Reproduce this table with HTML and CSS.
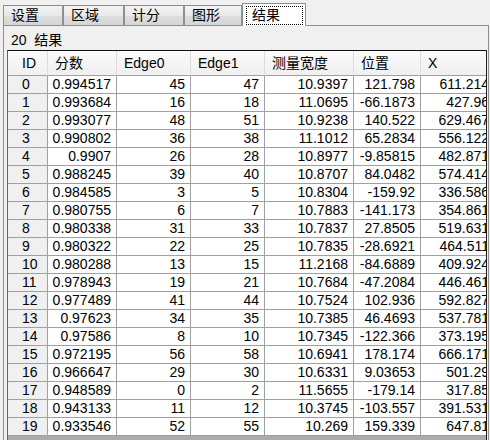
FILE: index.html
```html
<!DOCTYPE html>
<html>
<head>
<meta charset="utf-8">
<link rel="stylesheet" href="styles.css">
</head>
<body>
<div class="tabs">
  <div class="tab t1">设置</div>
  <div class="tab t2">区域</div>
  <div class="tab t3">计分</div>
  <div class="tab t4">图形</div>
  <div class="tab sel"><span class="focus">结果</span></div>
</div>
<div class="panel">
  <div class="label">20&nbsp;&nbsp;结果</div>
  <div class="grid">
    <table>
      <colgroup>
        <col class="c-id"><col class="c-score"><col class="c-e0"><col class="c-e1"><col class="c-w"><col class="c-pos"><col class="c-x">
      </colgroup>
      <thead>
        <tr><th class="rh">ID</th><th>分数</th><th>Edge0</th><th>Edge1</th><th>测量宽度</th><th>位置</th><th>X</th></tr>
      </thead>
      <tbody>
        <tr><td class="rh">0</td><td>0.994517</td><td>45</td><td>47</td><td>10.9397</td><td>121.798</td><td>611.214</td></tr>
        <tr><td class="rh">1</td><td>0.993684</td><td>16</td><td>18</td><td>11.0695</td><td>-66.1873</td><td>427.96</td></tr>
        <tr><td class="rh">2</td><td>0.993077</td><td>48</td><td>51</td><td>10.9238</td><td>140.522</td><td>629.467</td></tr>
        <tr><td class="rh">3</td><td>0.990802</td><td>36</td><td>38</td><td>11.1012</td><td>65.2834</td><td>556.122</td></tr>
        <tr><td class="rh">4</td><td>0.9907</td><td>26</td><td>28</td><td>10.8977</td><td>-9.85815</td><td>482.871</td></tr>
        <tr><td class="rh">5</td><td>0.988245</td><td>39</td><td>40</td><td>10.8707</td><td>84.0482</td><td>574.414</td></tr>
        <tr><td class="rh">6</td><td>0.984585</td><td>3</td><td>5</td><td>10.8304</td><td>-159.92</td><td>336.586</td></tr>
        <tr><td class="rh">7</td><td>0.980755</td><td>6</td><td>7</td><td>10.7883</td><td>-141.173</td><td>354.861</td></tr>
        <tr><td class="rh">8</td><td>0.980338</td><td>31</td><td>33</td><td>10.7837</td><td>27.8505</td><td>519.631</td></tr>
        <tr><td class="rh">9</td><td>0.980322</td><td>22</td><td>25</td><td>10.7835</td><td>-28.6921</td><td>464.511</td></tr>
        <tr><td class="rh">10</td><td>0.980288</td><td>13</td><td>15</td><td>11.2168</td><td>-84.6889</td><td>409.924</td></tr>
        <tr><td class="rh">11</td><td>0.978943</td><td>19</td><td>21</td><td>10.7684</td><td>-47.2084</td><td>446.461</td></tr>
        <tr><td class="rh">12</td><td>0.977489</td><td>41</td><td>44</td><td>10.7524</td><td>102.936</td><td>592.827</td></tr>
        <tr><td class="rh">13</td><td>0.97623</td><td>34</td><td>35</td><td>10.7385</td><td>46.4693</td><td>537.781</td></tr>
        <tr><td class="rh">14</td><td>0.97586</td><td>8</td><td>10</td><td>10.7345</td><td>-122.366</td><td>373.195</td></tr>
        <tr><td class="rh">15</td><td>0.972195</td><td>56</td><td>58</td><td>10.6941</td><td>178.174</td><td>666.171</td></tr>
        <tr><td class="rh">16</td><td>0.966647</td><td>29</td><td>30</td><td>10.6331</td><td>9.03653</td><td>501.29</td></tr>
        <tr><td class="rh">17</td><td>0.948589</td><td>0</td><td>2</td><td>11.5655</td><td>-179.14</td><td>317.85</td></tr>
        <tr><td class="rh">18</td><td>0.943133</td><td>11</td><td>12</td><td>10.3745</td><td>-103.557</td><td>391.531</td></tr>
        <tr><td class="rh">19</td><td>0.933546</td><td>52</td><td>55</td><td>10.269</td><td>159.339</td><td>647.81</td></tr>
      </tbody>
    </table>
  </div>
</div>
</body>
</html>
```
FILE: styles.css
```css
html, body {
  margin: 0;
  padding: 0;
}
body {
  width: 490px;
  height: 440px;
  overflow: hidden;
  background: #f0f0f0;
  font-family: "Liberation Sans", "Noto Sans CJK SC", sans-serif;
  font-size: 14px;
  color: #000;
}
.tabs {
  display: flex;
  align-items: flex-end;
  height: 25px;
  padding-left: 3px;
  position: relative;
  z-index: 2;
}
.tab {
  box-sizing: border-box;
  height: 20px;
  border: 1px solid #8e8f8f;
  border-bottom: 0;
  background: linear-gradient(#f3f3f3, #e9e9e9 50%, #dedede 51%, #d6d6d6);
  padding-left: 7px;
  line-height: 19px;
  white-space: nowrap;
}
.t1 { width: 60px; }
.t2 { width: 61px; }
.t3 { width: 60px; }
.t4 { width: 58px; }
.tab.sel {
  width: 64px;
  height: 23px;
  margin-bottom: -1px;
  background: #fff;
  padding: 2px 0 0 3px;
  line-height: 17px;
}
.focus {
  display: inline-block;
  box-sizing: border-box;
  width: 57px;
  height: 19px;
  border: 1px dotted #000;
  padding-left: 5px;
  line-height: 16px;
}
.panel {
  position: relative;
  z-index: 1;
  box-sizing: border-box;
  margin-left: 3px;
  width: 486px;
  height: 430px;
  border: 1px solid #8e8f8f;
  background: #f0f0f0;
}
.label {
  box-sizing: border-box;
  height: 24px;
  padding: 6px 0 0 7px;
  line-height: 17px;
}
.grid {
  margin-left: 3px;
  width: 480px;
  height: 400px;
  box-sizing: border-box;
  border-top: 1px solid #101010;
  border-left: 1px solid #646464;
  border-right: 1px solid #1e1e1e;
  background: #ababab;
  overflow: hidden;
}
table {
  table-layout: fixed;
  border-collapse: separate;
  border-spacing: 0;
  width: 493px;
}
.c-id { width: 40px; }
.c-score { width: 69px; }
.c-e0 { width: 74px; }
.c-e1 { width: 74px; }
.c-w { width: 89px; }
.c-pos { width: 67px; }
.c-x { width: 80px; }
th, td {
  box-sizing: border-box;
  padding: 0;
  white-space: nowrap;
  overflow: hidden;
  font-weight: normal;
}
th {
  text-align: left;
  padding-left: 7px;
  line-height: 24px;
  background: linear-gradient(#fafafa, #f0f0f0);
  border-right: 1px solid #dcdcdc;
  border-bottom: 1px solid #a0a0a0;
}
td {
  text-align: right;
  padding-right: 5px;
  line-height: 17px;
  background: #fff;
  border-right: 1px solid #a0a0a0;
  border-bottom: 1px solid #a0a0a0;
}
th.rh {
  padding-left: 14px;
}
td.rh {
  text-align: left;
  padding-left: 14px;
  padding-right: 0;
  background: #f0f0f0;
}
tbody td:last-child {
  padding-right: 11px;
}
```
